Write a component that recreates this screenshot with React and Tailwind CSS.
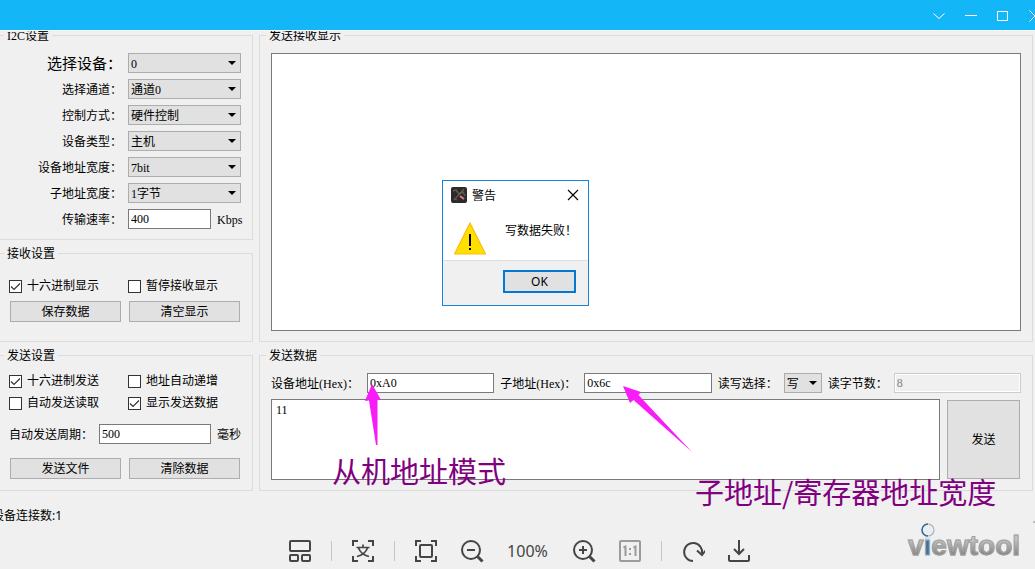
import React from "react";

const FONT = "font-['Liberation_Serif','Noto_Sans_CJK_SC',serif]";
const UI_FONT = "font-['Noto_Sans','Noto_Sans_CJK_SC',sans-serif]";

function Group({ title, className = "", legendClass = "ml-[4px]", children }) {
  return (
    <fieldset className={`min-w-0 border border-[#dcdcdc] ${className}`}>
      <legend className={`h-4 px-[3px] leading-[18px] ${legendClass}`}>{title}</legend>
      {children}
    </fieldset>
  );
}

function Select({ id, value, className = "" }) {
  return (
    <div className={`relative ${className}`}>
      <select
        id={id}
        defaultValue={value}
        className="block h-5 w-full appearance-none border border-[#adadad] bg-[#e1e1e1] pl-[2px] pt-px leading-4 outline-none"
      >
        <option value={value}>{value}</option>
      </select>
      <svg
        className="pointer-events-none absolute right-[5px] top-2"
        width="8"
        height="4"
        viewBox="0 0 8 4"
      >
        <path d="M0 0H8L4 4Z" fill="#000" />
      </svg>
    </div>
  );
}

function TextBox({ id, value, className = "" }) {
  return (
    <input
      id={id}
      type="text"
      defaultValue={value}
      className={`h-5 min-w-0 flex-1 border border-[#7a7a7a] bg-white pl-[2px] leading-4 outline-none ${className}`}
    />
  );
}

function Button({ children, className = "h-[21px]" }) {
  return (
    <button type="button" className={`border border-[#adadad] bg-[#e1e1e1] pt-px leading-4 ${className}`}>
      {children}
    </button>
  );
}

function Check({ label, checked = false }) {
  return (
    <label className="flex h-4 items-center gap-[5px] whitespace-nowrap leading-[18px]">
      <span className="grid h-[13px] w-[13px] shrink-0">
        <input
          type="checkbox"
          defaultChecked={checked}
          className="peer col-start-1 row-start-1 h-[13px] w-[13px] appearance-none border border-[#333] bg-white"
        />
        <svg
          className="pointer-events-none invisible col-start-1 row-start-1 peer-checked:visible"
          width="13"
          height="13"
          viewBox="0 0 13 13"
          fill="none"
          stroke="#333"
          strokeWidth="1.2"
        >
          <path d="M2 6.5L5 9.5L11 3.5" />
        </svg>
      </span>
      {label}
    </label>
  );
}

const deviceRows = [
  ["device", "选择设备：", "0", "text-[15px]"],
  ["channel", "选择通道：", "通道0", ""],
  ["control", "控制方式：", "硬件控制", ""],
  ["kind", "设备类型：", "主机", ""],
  ["addr-width", "设备地址宽度：", "7bit", ""],
  ["sub-width", "子地址宽度：", "1字节", ""],
];

function SettingsColumn() {
  return (
    <div className="flex w-[253px] shrink-0 flex-col gap-[5px]">
      <Group title="I2C设置" className="border-l-0">
        <div className="flex flex-col gap-[6px] py-[10px] pr-[11px]">
          {deviceRows.map(([id, label, value, size]) => (
            <div key={id} className="flex items-center gap-[6px]">
              <label htmlFor={id} className={`h-5 w-[122px] whitespace-nowrap text-right leading-[22px] ${size}`}>
                {label}
              </label>
              <Select id={id} value={value} className="flex-1" />
            </div>
          ))}
          <div className="flex items-center gap-[6px]">
            <label htmlFor="rate" className="h-5 w-[122px] text-right leading-[22px]">传输速率：</label>
            <TextBox id="rate" value="400" />
            <span className="h-5 w-6 leading-[22px]">Kbps</span>
          </div>
        </div>
      </Group>

      <Group title="接收设置" className="border-l-0">
        <div className="flex flex-col gap-[7px] pb-[19px] pt-[17px]">
          <div className="grid grid-cols-2 gap-x-2 pl-[9px] pr-[13px]">
            <Check label="十六进制显示" checked />
            <Check label="暂停接收显示" />
          </div>
          <div className="grid grid-cols-2 gap-x-2 pl-[10px] pr-[12px]">
            <Button>保存数据</Button>
            <Button>清空显示</Button>
          </div>
        </div>
      </Group>

      <Group title="发送设置" className="border-l-0">
        <div className="pb-[11px] pt-[10px]">
          <div className="grid grid-cols-2 gap-x-2 gap-y-[6px] pl-[9px] pr-[13px]">
            <Check label="十六进制发送" checked />
            <Check label="地址自动递增" />
            <Check label="自动发送读取" />
            <Check label="显示发送数据" checked />
          </div>
          <div className="mt-[13px] flex items-center gap-[6px] pl-[9px] pr-[11px]">
            <label htmlFor="period" className="h-5 w-[84px] whitespace-nowrap leading-[22px]">自动发送周期：</label>
            <TextBox id="period" value="500" />
            <span className="h-5 w-6 leading-[22px]">毫秒</span>
          </div>
          <div className="mt-[14px] grid grid-cols-2 gap-x-2 pl-[10px] pr-[12px]">
            <Button>发送文件</Button>
            <Button>清除数据</Button>
          </div>
        </div>
      </Group>
    </div>
  );
}

function DataColumn() {
  return (
    <div className="flex min-w-0 flex-1 flex-col gap-[5px]">
      <Group title="发送接收显示" className="flex-1" legendClass="ml-[6px]">
        <div className="flex h-full px-[11px] py-[10px]">
          <textarea
            aria-label="发送接收显示"
            className="block min-h-[278px] flex-1 resize-none border border-[#7a7a7a] bg-white outline-none"
          />
        </div>
      </Group>

      <Group title="发送数据" legendClass="ml-[6px]">
        <div className="flex flex-col gap-[6px] px-[11px] py-[10px]">
          <div className="flex h-5 items-center gap-[6px] leading-[22px]">
            <label htmlFor="addr" className="h-5 w-[90px] shrink-0 whitespace-nowrap">设备地址(Hex)：</label>
            <TextBox id="addr" value="0xA0" />
            <label htmlFor="sub" className="h-5 w-[78px] shrink-0 whitespace-nowrap">子地址(Hex)：</label>
            <TextBox id="sub" value="0x6c" />
            <label htmlFor="rw" className="h-5 w-[60px] shrink-0 whitespace-nowrap">读写选择：</label>
            <Select id="rw" value="写" className="w-[38px] shrink-0" />
            <label htmlFor="bytes" className="h-5 w-[60px] shrink-0 whitespace-nowrap">读字节数：</label>
            <input
              id="bytes"
              type="text"
              defaultValue="8"
              disabled
              className="h-5 min-w-0 flex-1 border border-[#ccc] bg-[#f0f0f0] pl-[2px] leading-4 text-[#838383] shadow-[inset_0_0_0_1px_#fff]"
            />
          </div>
          <div className="flex gap-[7px]">
            <textarea
              aria-label="发送数据"
              defaultValue="11"
              className="block h-[81px] min-w-0 flex-1 resize-none border border-[#7a7a7a] bg-white px-1 pt-[2px] leading-4 outline-none"
            />
            <Button className="my-px mr-px w-[73px]">发送</Button>
          </div>
        </div>
      </Group>
    </div>
  );
}

function WindowButton({ label, className = "", children }) {
  return (
    <button type="button" aria-label={label} className={`grid h-full w-8 shrink-0 place-items-center ${className}`}>
      <svg width="12" height="12" viewBox="0 0 12 12" fill="none" stroke="#fff" strokeWidth="1">
        {children}
      </svg>
    </button>
  );
}

function TitleBar() {
  return (
    <header className="relative z-10 flex h-[31px] justify-end overflow-hidden border-b border-white bg-[#13b7f8] pt-px">
      <WindowButton label="更多"><path d="M.5 3.5L6 8.5L11.5 3.5" /></WindowButton>
      <WindowButton label="最小化"><path d="M0 5.5H12" /></WindowButton>
      <WindowButton label="最大化"><path d="M.5 1.5H10.5V10.5H.5Z" /></WindowButton>
      <WindowButton label="关闭" className="-mr-4"><path d="M.5 .5L11.5 11.5M11.5 .5L.5 11.5" /></WindowButton>
    </header>
  );
}

function Tool({ label, color = "#454545", children }) {
  return (
    <button type="button" aria-label={label} className="h-6 w-6 shrink-0">
      <svg width="24" height="24" viewBox="0 0 24 24" fill="none" stroke={color} strokeWidth="2">
        {children}
      </svg>
    </button>
  );
}

function Divider() {
  return <span className="-mx-[3px] h-5 w-px bg-[#c6c6ca]" />;
}

function Toolbar() {
  return (
    <div className={`flex items-center justify-center gap-[22px] pl-[3px] text-[#454545] ${UI_FONT}`}>
      <Tool label="布局">
        <rect x="2" y="2" width="20" height="10" rx="1" />
        <rect x="2" y="16" width="8" height="6" rx="1" />
        <rect x="14" y="16" width="8" height="6" rx="1" />
      </Tool>
      <Divider />
      <Tool label="文字识别">
        <path d="M2 7V2H7M17 2H22V7M22 17V22H17M7 22H2V17" />
        <path d="M5.500 8.500H18.500M12 5.500V8.500M7.500 9C9 13 12 16 18 17.500M16.500 9C15 13 12 16 6 17.500" strokeWidth="1.700" />
      </Tool>
      <Divider />
      <Tool label="适应窗口">
        <path d="M2 7V2H7M17 2H22V7M22 17V22H17M7 22H2V17" />
        <rect x="6" y="6" width="12" height="12" rx="1" />
      </Tool>
      <Tool label="缩小">
        <circle cx="11" cy="11" r="9" />
        <path d="M7 11H15" />
        <path d="M17.500 17.500L22.500 22.500" strokeWidth="3" />
      </Tool>
      <span className="w-11 whitespace-nowrap text-center text-[16px] leading-6">100%</span>
      <Tool label="放大">
        <circle cx="11" cy="11" r="9" />
        <path d="M7 11H15M11 7V15" />
        <path d="M17.500 17.500L22.500 22.500" strokeWidth="3" />
      </Tool>
      <Tool label="原始大小" color="#9b9b9b">
        <rect x="2" y="2" width="20" height="20" rx="1" />
        <path d="M5.500 8.500L7.500 7.500V17M15.500 8.500L17.500 7.500V17M12 9V11M12 14V16" />
      </Tool>
      <Divider />
      <Tool label="旋转">
        <path d="M12 22A9 9 0 1 1 21 14.500" />
        <path d="M16 11.500L21 16L25 11" />
      </Tool>
      <Tool label="下载">
        <path d="M12 1V14.500M7 10L12 15L17 10" />
        <path d="M2 16V21Q2 22 3 22H21Q22 22 22 21V16" />
      </Tool>
    </div>
  );
}

function Logo() {
  return (
    <div className="absolute right-[13px] top-[522px] h-10 w-[114px]">
      <div className="pt-2 font-['Liberation_Sans',sans-serif] text-[28px] font-bold leading-8 [-webkit-text-stroke:1px_#a2a2a2]">
        <span className="bg-linear-to-b from-[#c4c4c4] from-30% to-[#858585] to-80% bg-clip-text text-transparent">v</span>
        <span className="text-[#3f7298] [-webkit-text-stroke:1px_#8fa9bc]">i</span>
        <span className="bg-linear-to-b from-[#c4c4c4] from-30% to-[#858585] to-80% bg-clip-text text-transparent">ewtool</span>
      </div>
      <svg className="absolute left-[12px] top-0" width="16" height="16" viewBox="0 0 16 16">
        <circle cx="8" cy="8" r="8" fill="#f0f0f0" />
        <circle cx="8" cy="8" r="6" fill="#e9eef3" stroke="#a9b4be" strokeWidth="1.200" />
        <path d="M8 14A6 6 0 0 1 8 2" fill="none" stroke="#356b94" strokeWidth="1.500" />
      </svg>
    </div>
  );
}

function WarningDialog() {
  return (
    <div
      role="dialog"
      aria-label="警告"
      className={`absolute left-[442px] top-[180px] w-[147px] border border-[#1883d7] bg-white ${UI_FONT}`}
    >
      <div className="flex h-7 items-center pl-2 pr-[9px]">
        <svg width="16" height="16" viewBox="0 0 16 16">
          <rect width="16" height="16" rx="2" fill="#2c2a2a" />
          <path d="M2 4L5 3L8 7L12 5L14 9" stroke="#5c5856" strokeWidth="1.500" fill="none" />
          <path d="M3 13L13 2" stroke="#8b7a3e" strokeWidth="1" />
          <path d="M9 9L13 12" stroke="#d77a86" strokeWidth="2" />
          <path d="M3 11L6 13" stroke="#55504e" strokeWidth="2" />
        </svg>
        <span className="ml-[5px] h-4 flex-1 leading-[18px]">警告</span>
        <button type="button" aria-label="关闭">
          <svg width="12" height="12" viewBox="0 0 12 12" stroke="#000" strokeWidth="1.100">
            <path d="M1 1L11 11M11 1L1 11" />
          </svg>
        </button>
      </div>
      <div className="flex h-[51px] gap-[19px] pl-[11px] pt-[13px]">
        <svg width="32" height="33" viewBox="0 0 32 33">
          <path d="M16 1L31.500 32H.5Z" fill="#ffe000" stroke="#fdbb12" strokeWidth="1.200" />
          <path d="M16 12V24M16 26V28" stroke="#000" strokeWidth="2" />
        </svg>
        <p className="whitespace-nowrap leading-[18px]">写数据失败！</p>
      </div>
      <div className="flex justify-end border-t border-[#dfdfdf] bg-[#f0f0f0] pb-3 pr-3 pt-[9px]">
        <button type="button" className="h-[23px] w-[73px] border-2 border-[#0078d7] bg-[#e1e1e1] leading-4">
          OK
        </button>
      </div>
    </div>
  );
}

function Annotations() {
  return (
    <div className="pointer-events-none font-['Noto_Sans_CJK_SC',sans-serif] text-[29px] leading-9 text-[#800080]">
      <svg className="absolute left-[364px] top-[384px]" width="18" height="62" viewBox="0 0 18 62">
        <path d="M8 0L17 16L13.500 15.500V61H12L5 16.500L1 17Z" fill="#f81cf8" />
      </svg>
      <svg className="absolute left-[623px] top-[386px]" width="70" height="67" viewBox="0 0 70 67">
        <path d="M0 0L18 6L15.500 9L69 66L10.500 14L7 17Z" fill="#f81cf8" />
      </svg>
      <span className="absolute left-[332px] top-[452px] whitespace-nowrap">从机地址模式</span>
      <span className="absolute left-[695px] top-[473px] whitespace-nowrap">子地址/寄存器地址宽度</span>
    </div>
  );
}

export default function App() {
  return (
    <div className={`relative min-h-screen overflow-hidden bg-[#f0f0f0] text-[12px] text-black ${FONT}`}>
      <TitleBar />
      <main className="-mt-1 flex gap-[6px] pr-[2px]">
        <SettingsColumn />
        <DataColumn />
      </main>
      <p className={`-ml-[8px] mt-4 h-4 leading-[18px] ${UI_FONT}`}>设备连接数:1</p>
      <div className="mt-4">
        <Toolbar />
      </div>
      <span className="absolute right-0 top-[521px] h-[2px] w-[2px] bg-[#bcbcbc]" />
      <Logo />
      <WarningDialog />
      <Annotations />
    </div>
  );
}
